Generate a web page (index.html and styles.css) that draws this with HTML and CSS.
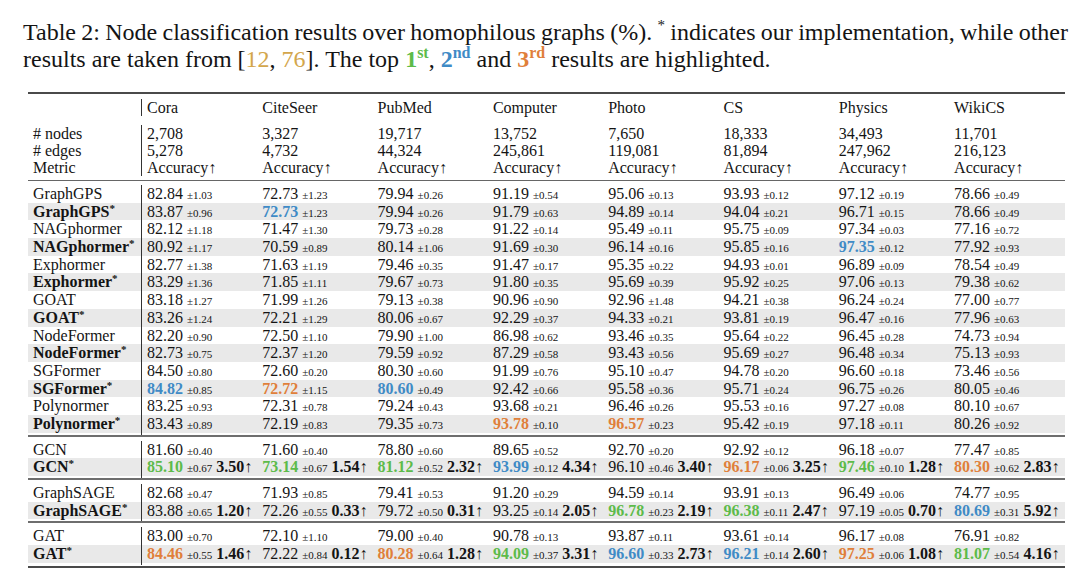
FILE: index.html
```html
<!DOCTYPE html>
<html lang="en">
<head>
<meta charset="utf-8">
<title>Table 2</title>
<link rel="stylesheet" href="styles.css">
</head>
<body>
<div class="caption">
  <div class="l1">Table 2: Node classification results over homophilous graphs (%). <sup class="cstar">*</sup> indicates our implementation, while other</div>
  <div class="l2">results are taken from [<span class="cite">12</span>, <span class="cite">76</span>]. The top <b class="g">1<sup>st</sup></b>, <b class="b">2<sup>nd</sup></b> and <b class="o">3<sup>rd</sup></b> results are highlighted.</div>
</div>

<div class="table">
  <div class="row head"><div></div><div>Cora</div><div>CiteSeer</div><div>PubMed</div><div>Computer</div><div>Photo</div><div>CS</div><div>Physics</div><div>WikiCS</div></div>

  <div class="stats">
    <div class="row"><div># nodes</div><div>2,708</div><div>3,327</div><div>19,717</div><div>13,752</div><div>7,650</div><div>18,333</div><div>34,493</div><div>11,701</div></div>
    <div class="row"><div># edges</div><div>5,278</div><div>4,732</div><div>44,324</div><div>245,861</div><div>119,081</div><div>81,894</div><div>247,962</div><div>216,123</div></div>
    <div class="row"><div>Metric</div><div>Accuracy↑</div><div>Accuracy↑</div><div>Accuracy↑</div><div>Accuracy↑</div><div>Accuracy↑</div><div>Accuracy↑</div><div>Accuracy↑</div><div>Accuracy↑</div></div>
  </div>

  <div class="grp">
    <div class="row"><div>GraphGPS</div><div>82.84 <small>±1.03</small></div><div>72.73 <small>±1.23</small></div><div>79.94 <small>±0.26</small></div><div>91.19 <small>±0.54</small></div><div>95.06 <small>±0.13</small></div><div>93.93 <small>±0.12</small></div><div>97.12 <small>±0.19</small></div><div>78.66 <small>±0.49</small></div></div>
    <div class="row alt"><div>GraphGPS<sup>*</sup></div><div>83.87 <small>±0.96</small></div><div><b class="b">72.73</b> <small>±1.23</small></div><div>79.94 <small>±0.26</small></div><div>91.79 <small>±0.63</small></div><div>94.89 <small>±0.14</small></div><div>94.04 <small>±0.21</small></div><div>96.71 <small>±0.15</small></div><div>78.66 <small>±0.49</small></div></div>
    <div class="row"><div>NAGphormer</div><div>82.12 <small>±1.18</small></div><div>71.47 <small>±1.30</small></div><div>79.73 <small>±0.28</small></div><div>91.22 <small>±0.14</small></div><div>95.49 <small>±0.11</small></div><div>95.75 <small>±0.09</small></div><div>97.34 <small>±0.03</small></div><div>77.16 <small>±0.72</small></div></div>
    <div class="row alt"><div>NAGphormer<sup>*</sup></div><div>80.92 <small>±1.17</small></div><div>70.59 <small>±0.89</small></div><div>80.14 <small>±1.06</small></div><div>91.69 <small>±0.30</small></div><div>96.14 <small>±0.16</small></div><div>95.85 <small>±0.16</small></div><div><b class="b">97.35</b> <small>±0.12</small></div><div>77.92 <small>±0.93</small></div></div>
    <div class="row"><div>Exphormer</div><div>82.77 <small>±1.38</small></div><div>71.63 <small>±1.19</small></div><div>79.46 <small>±0.35</small></div><div>91.47 <small>±0.17</small></div><div>95.35 <small>±0.22</small></div><div>94.93 <small>±0.01</small></div><div>96.89 <small>±0.09</small></div><div>78.54 <small>±0.49</small></div></div>
    <div class="row alt"><div>Exphormer<sup>*</sup></div><div>83.29 <small>±1.36</small></div><div>71.85 <small>±1.11</small></div><div>79.67 <small>±0.73</small></div><div>91.80 <small>±0.35</small></div><div>95.69 <small>±0.39</small></div><div>95.92 <small>±0.25</small></div><div>97.06 <small>±0.13</small></div><div>79.38 <small>±0.62</small></div></div>
    <div class="row"><div>GOAT</div><div>83.18 <small>±1.27</small></div><div>71.99 <small>±1.26</small></div><div>79.13 <small>±0.38</small></div><div>90.96 <small>±0.90</small></div><div>92.96 <small>±1.48</small></div><div>94.21 <small>±0.38</small></div><div>96.24 <small>±0.24</small></div><div>77.00 <small>±0.77</small></div></div>
    <div class="row alt"><div>GOAT<sup>*</sup></div><div>83.26 <small>±1.24</small></div><div>72.21 <small>±1.29</small></div><div>80.06 <small>±0.67</small></div><div>92.29 <small>±0.37</small></div><div>94.33 <small>±0.21</small></div><div>93.81 <small>±0.19</small></div><div>96.47 <small>±0.16</small></div><div>77.96 <small>±0.63</small></div></div>
    <div class="row"><div>NodeFormer</div><div>82.20 <small>±0.90</small></div><div>72.50 <small>±1.10</small></div><div>79.90 <small>±1.00</small></div><div>86.98 <small>±0.62</small></div><div>93.46 <small>±0.35</small></div><div>95.64 <small>±0.22</small></div><div>96.45 <small>±0.28</small></div><div>74.73 <small>±0.94</small></div></div>
    <div class="row alt"><div>NodeFormer<sup>*</sup></div><div>82.73 <small>±0.75</small></div><div>72.37 <small>±1.20</small></div><div>79.59 <small>±0.92</small></div><div>87.29 <small>±0.58</small></div><div>93.43 <small>±0.56</small></div><div>95.69 <small>±0.27</small></div><div>96.48 <small>±0.34</small></div><div>75.13 <small>±0.93</small></div></div>
    <div class="row"><div>SGFormer</div><div>84.50 <small>±0.80</small></div><div>72.60 <small>±0.20</small></div><div>80.30 <small>±0.60</small></div><div>91.99 <small>±0.76</small></div><div>95.10 <small>±0.47</small></div><div>94.78 <small>±0.20</small></div><div>96.60 <small>±0.18</small></div><div>73.46 <small>±0.56</small></div></div>
    <div class="row alt"><div>SGFormer<sup>*</sup></div><div><b class="b">84.82</b> <small>±0.85</small></div><div><b class="o">72.72</b> <small>±1.15</small></div><div><b class="b">80.60</b> <small>±0.49</small></div><div>92.42 <small>±0.66</small></div><div>95.58 <small>±0.36</small></div><div>95.71 <small>±0.24</small></div><div>96.75 <small>±0.26</small></div><div>80.05 <small>±0.46</small></div></div>
    <div class="row"><div>Polynormer</div><div>83.25 <small>±0.93</small></div><div>72.31 <small>±0.78</small></div><div>79.24 <small>±0.43</small></div><div>93.68 <small>±0.21</small></div><div>96.46 <small>±0.26</small></div><div>95.53 <small>±0.16</small></div><div>97.27 <small>±0.08</small></div><div>80.10 <small>±0.67</small></div></div>
    <div class="row alt"><div>Polynormer<sup>*</sup></div><div>83.43 <small>±0.89</small></div><div>72.19 <small>±0.83</small></div><div>79.35 <small>±0.73</small></div><div><b class="o">93.78</b> <small>±0.10</small></div><div><b class="o">96.57</b> <small>±0.23</small></div><div>95.42 <small>±0.19</small></div><div>97.18 <small>±0.11</small></div><div>80.26 <small>±0.92</small></div></div>
  </div>

  <div class="grp">
    <div class="row"><div>GCN</div><div>81.60 <small>±0.40</small></div><div>71.60 <small>±0.40</small></div><div>78.80 <small>±0.60</small></div><div>89.65 <small>±0.52</small></div><div>92.70 <small>±0.20</small></div><div>92.92 <small>±0.12</small></div><div>96.18 <small>±0.07</small></div><div>77.47 <small>±0.85</small></div></div>
    <div class="row alt"><div>GCN<sup>*</sup></div><div><b class="g">85.10</b> <small>±0.67</small> <b>3.50↑</b></div><div><b class="g">73.14</b> <small>±0.67</small> <b>1.54↑</b></div><div><b class="g">81.12</b> <small>±0.52</small> <b>2.32↑</b></div><div><b class="b">93.99</b> <small>±0.12</small> <b>4.34↑</b></div><div>96.10 <small>±0.46</small> <b>3.40↑</b></div><div><b class="o">96.17</b> <small>±0.06</small> <b>3.25↑</b></div><div><b class="g">97.46</b> <small>±0.10</small> <b>1.28↑</b></div><div><b class="o">80.30</b> <small>±0.62</small> <b>2.83↑</b></div></div>
  </div>

  <div class="grp">
    <div class="row"><div>GraphSAGE</div><div>82.68 <small>±0.47</small></div><div>71.93 <small>±0.85</small></div><div>79.41 <small>±0.53</small></div><div>91.20 <small>±0.29</small></div><div>94.59 <small>±0.14</small></div><div>93.91 <small>±0.13</small></div><div>96.49 <small>±0.06</small></div><div>74.77 <small>±0.95</small></div></div>
    <div class="row alt"><div>GraphSAGE<sup>*</sup></div><div>83.88 <small>±0.65</small> <b>1.20↑</b></div><div>72.26 <small>±0.55</small> <b>0.33↑</b></div><div>79.72 <small>±0.50</small> <b>0.31↑</b></div><div>93.25 <small>±0.14</small> <b>2.05↑</b></div><div><b class="g">96.78</b> <small>±0.23</small> <b>2.19↑</b></div><div><b class="g">96.38</b> <small>±0.11</small> <b>2.47↑</b></div><div>97.19 <small>±0.05</small> <b>0.70↑</b></div><div><b class="b">80.69</b> <small>±0.31</small> <b>5.92↑</b></div></div>
  </div>

  <div class="grp last">
    <div class="row"><div>GAT</div><div>83.00 <small>±0.70</small></div><div>72.10 <small>±1.10</small></div><div>79.00 <small>±0.40</small></div><div>90.78 <small>±0.13</small></div><div>93.87 <small>±0.11</small></div><div>93.61 <small>±0.14</small></div><div>96.17 <small>±0.08</small></div><div>76.91 <small>±0.82</small></div></div>
    <div class="row alt"><div>GAT<sup>*</sup></div><div><b class="o">84.46</b> <small>±0.55</small> <b>1.46↑</b></div><div>72.22 <small>±0.84</small> <b>0.12↑</b></div><div><b class="o">80.28</b> <small>±0.64</small> <b>1.28↑</b></div><div><b class="g">94.09</b> <small>±0.37</small> <b>3.31↑</b></div><div><b class="b">96.60</b> <small>±0.33</small> <b>2.73↑</b></div><div><b class="b">96.21</b> <small>±0.14</small> <b>2.60↑</b></div><div><b class="o">97.25</b> <small>±0.06</small> <b>1.08↑</b></div><div><b class="g">81.07</b> <small>±0.54</small> <b>4.16↑</b></div></div>
  </div>
</div>
</body>
</html>
```

FILE: styles.css
```css
* { box-sizing: border-box; margin: 0; padding: 0; }
html, body { background: #fff; }
body {
  font-family: "Liberation Serif", "Times New Roman", serif;
  color: #141414;
  width: 1080px;
  height: 586px;
  overflow: hidden;
}

/* caption */
.caption {
  padding: 19px 0 0 23px;
  width: 1068px;
  font-size: 24px;
  line-height: 26.5px;
}
.caption .l1 {
  text-align: justify;
  text-align-last: justify;
  word-spacing: -4px;
}
.caption sup {
  font-size: 16px;
  line-height: 0;
  vertical-align: 9px;
}
.caption .cstar { font-size: 15px; vertical-align: 10px; }
.cite { color: #d3a64c; }

.g { color: #5dbb4a; }
.b { color: #3f8bc6; }
.o { color: #e07f3a; }

/* table */
.table {
  margin: 20px 0 0 28px;
  width: 1037px;
  border-top: 2px solid #4a4a4a;
  border-bottom: 2px solid #4a4a4a;
}
.row {
  display: grid;
  grid-template-columns: 114px repeat(8, 115.3px);
  height: 17.7px;
  line-height: 17.7px;
  font-size: 16px;
  white-space: nowrap;
}
.row > div { padding-left: 5px; }
.row > div:first-child { border-right: 1px solid #333; }
.row small { font-size: 11px; }
.row sup {
  font-size: 11px;
  line-height: 0;
  vertical-align: 5px;
}
.row.alt { background: #e9e9e9; }
.row.alt > div:first-child { font-weight: bold; }

.head { margin-top: 5px; height: 17px; line-height: 17px; }

.stats {
  padding: 9px 0 4px;
  border-bottom: 1px solid #666;
  margin-bottom: 4px;
}
.stats .row { height: 17px; line-height: 17px; }

.grp {
  padding-bottom: 2px;
  border-bottom: 2px solid #6e6e6e;
  margin-bottom: 4px;
}
.grp.last {
  padding-bottom: 3px;
  border-bottom: 0;
  margin-bottom: 0;
}
```
